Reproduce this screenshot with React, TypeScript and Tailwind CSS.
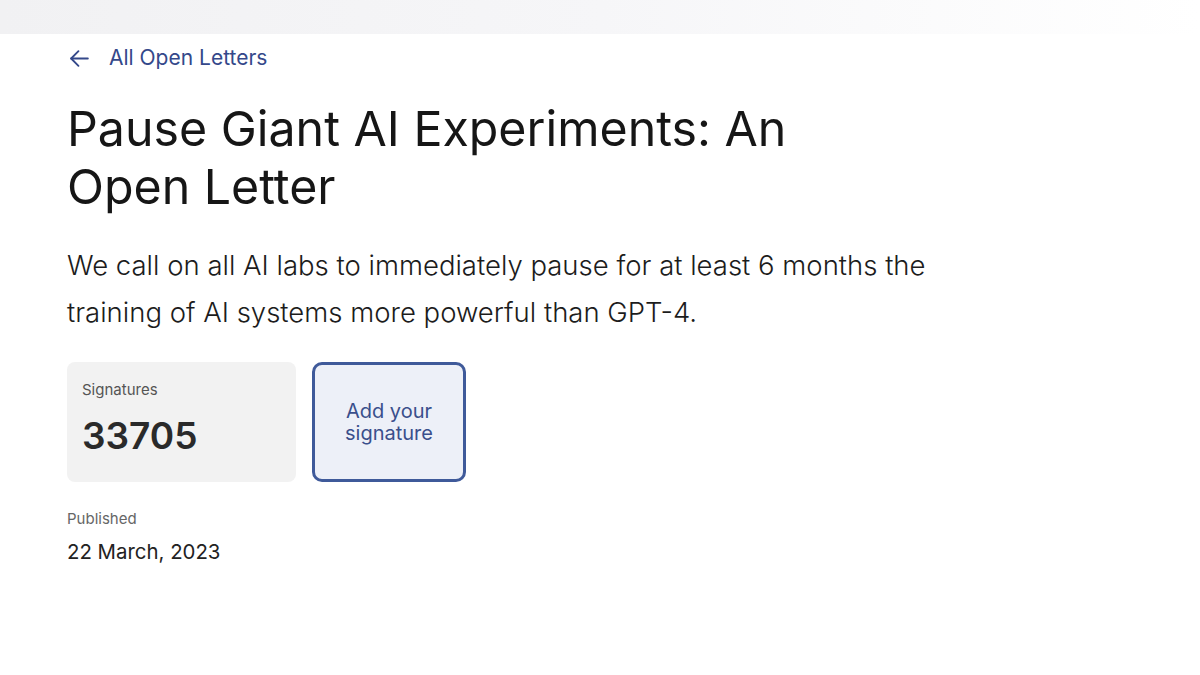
export default function App() {
  return (
    <div className="min-h-[675px] w-full bg-white" style={{ fontFamily: "Inter, 'Noto Sans', sans-serif" }}>
      <div className="h-[34px] w-full bg-gradient-to-r from-[#f1f1f3] via-[#f6f6f8] to-white" />

      <div className="pl-[67px]">
        <a href="#" className="mt-[9px] flex items-center gap-[17px] text-[21px] leading-[30px] text-[#34488a]">
          <svg width="25" height="25" viewBox="0 0 24 24" fill="none" stroke="currentColor" strokeWidth="1.8" strokeLinecap="round" strokeLinejoin="round">
            <path d="M20 12H4" />
            <path d="M11 5l-7 7 7 7" />
          </svg>
          <span>All Open Letters</span>
        </a>

        <h1 className="mt-[27px] w-[760px] text-[48.3px] font-normal leading-[58px] text-[#161616]">
          Pause Giant AI Experiments: An Open Letter
        </h1>

        <p className="mt-[26px] w-[890px] text-[27.5px] font-light leading-[47px] text-[#1c1c1c]">
          We call on all AI labs to immediately pause for at least 6 months the training of AI systems more powerful than GPT-4.
        </p>

        <div className="mt-[26px] flex gap-[16px]">
          <div className="flex h-[120px] w-[229px] flex-col rounded-[8px] bg-[#f2f2f2] px-[15px] pt-[18px]">
            <span className="text-[15px] leading-[20px] text-[#555555]">Signatures</span>
            <span className="mt-[15px] text-[37px] font-semibold leading-[42px] text-[#2a2a2a]">33705</span>
          </div>
          <button className="flex h-[120px] w-[154px] flex-col items-center justify-center rounded-[10px] border-[3px] border-[#3f5a9a] bg-[#edf0f8] text-center text-[20px] leading-[22px] text-[#3a4f8c]">
            <span>Add your</span>
            <span>signature</span>
          </button>
        </div>

        <div className="mt-[27px] text-[15px] leading-[20px] text-[#666666]">Published</div>
        <div className="mt-[10px] text-[20.4px] leading-[26px] text-[#222222]">22 March, 2023</div>
      </div>
    </div>
  );
}
